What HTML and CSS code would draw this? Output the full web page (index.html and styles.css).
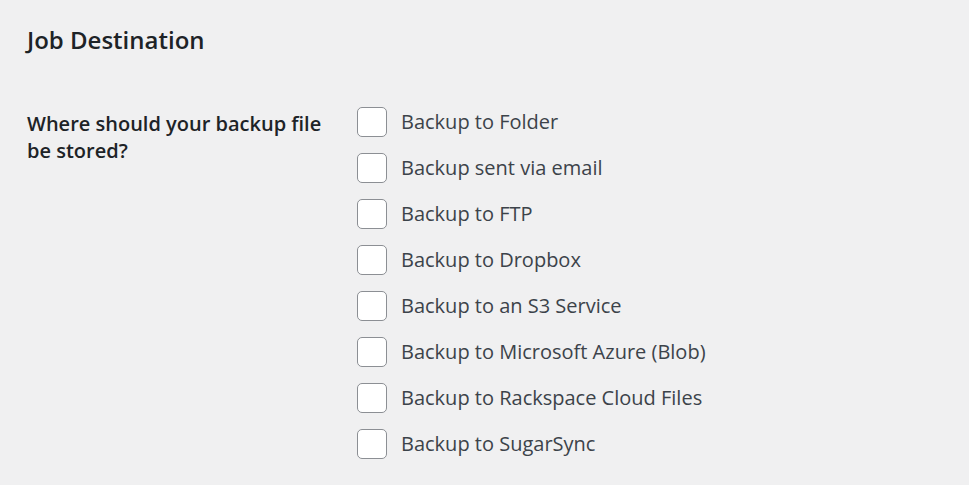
FILE: index.html
```html
<!DOCTYPE html>
<html lang="en">
<head>
    <meta charset="UTF-8">
    <meta name="viewport" content="width=device-width, initial-scale=1.0">
    <title>Job Destination</title>
    <link rel="stylesheet" href="styles.css">
</head>
<body>
    <div class="wrap">
        <h2 class="section-title">Job Destination</h2>

        <div class="form-row">
            <div class="form-label">Where should your backup file be stored?</div>
            <div class="form-field">
                <label class="dest"><input type="checkbox"><span>Backup to Folder</span></label>
                <label class="dest"><input type="checkbox"><span>Backup sent via email</span></label>
                <label class="dest"><input type="checkbox"><span>Backup to FTP</span></label>
                <label class="dest"><input type="checkbox"><span>Backup to Dropbox</span></label>
                <label class="dest"><input type="checkbox"><span>Backup to an S3 Service</span></label>
                <label class="dest"><input type="checkbox"><span>Backup to Microsoft Azure (Blob)</span></label>
                <label class="dest"><input type="checkbox"><span>Backup to Rackspace Cloud Files</span></label>
                <label class="dest"><input type="checkbox"><span>Backup to SugarSync</span></label>
            </div>
        </div>
    </div>
</body>
</html>
```

FILE: styles.css
```css
body {
    margin: 0;
    background: #f0f0f1;
    font-family: 'Open Sans', 'Noto Sans', sans-serif;
    color: #3c434a;
}

.wrap {
    padding: 23px 27px;
}

.section-title {
    margin: 0 0 50px;
    font-size: 24px;
    font-weight: 600;
    line-height: 34px;
    color: #1d2327;
}

.form-row {
    display: flex;
}

.form-label {
    width: 300px;
    margin-right: 30px;
    padding-top: 3px;
    font-size: 20px;
    font-weight: 600;
    line-height: 27px;
    color: #1d2327;
}

.form-field {
    display: flex;
    flex-direction: column;
    gap: 16px;
}

.dest {
    display: flex;
    align-items: center;
    gap: 14px;
    font-size: 20px;
    line-height: 30px;
}

.dest input {
    appearance: none;
    margin: 0;
    width: 30px;
    height: 30px;
    background: #fff;
    border: 1px solid #8c8f94;
    border-radius: 5px;
}
```
